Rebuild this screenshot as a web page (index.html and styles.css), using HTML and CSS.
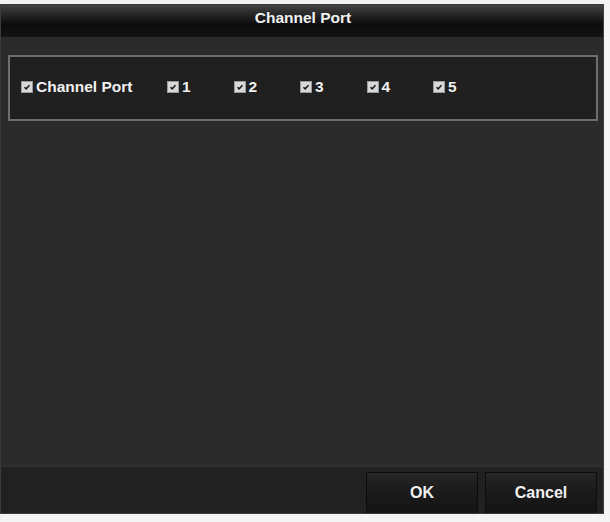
FILE: index.html
```html
<!DOCTYPE html>
<html>
<head>
<meta charset="utf-8">
<link rel="stylesheet" href="styles.css">
</head>
<body>
<div class="dialog">
  <div class="titlebar">Channel Port</div>
  <div class="content">
    <div class="group">
      <label class="item item-main"><span class="cb"><svg viewBox="0 0 12 12"><path d="M3 6.2 L5 8.2 L9 3.8" fill="none" stroke="#1a1a1a" stroke-width="1.8"/></svg></span>Channel Port</label>
      <label class="item"><span class="cb"><svg viewBox="0 0 12 12"><path d="M3 6.2 L5 8.2 L9 3.8" fill="none" stroke="#1a1a1a" stroke-width="1.8"/></svg></span>1</label>
      <label class="item"><span class="cb"><svg viewBox="0 0 12 12"><path d="M3 6.2 L5 8.2 L9 3.8" fill="none" stroke="#1a1a1a" stroke-width="1.8"/></svg></span>2</label>
      <label class="item"><span class="cb"><svg viewBox="0 0 12 12"><path d="M3 6.2 L5 8.2 L9 3.8" fill="none" stroke="#1a1a1a" stroke-width="1.8"/></svg></span>3</label>
      <label class="item"><span class="cb"><svg viewBox="0 0 12 12"><path d="M3 6.2 L5 8.2 L9 3.8" fill="none" stroke="#1a1a1a" stroke-width="1.8"/></svg></span>4</label>
      <label class="item"><span class="cb"><svg viewBox="0 0 12 12"><path d="M3 6.2 L5 8.2 L9 3.8" fill="none" stroke="#1a1a1a" stroke-width="1.8"/></svg></span>5</label>
    </div>
  </div>
  <div class="footer">
    <button class="btn">OK</button>
    <button class="btn">Cancel</button>
  </div>
</div>
</body>
</html>
```
FILE: styles.css
```css
html, body {
  margin: 0;
  padding: 0;
  background: #f4f4f4;
}
body {
  font-family: "Liberation Sans", Arial, sans-serif;
  padding-top: 4px;
}
.dialog {
  width: 602px;
  height: 508px;
  border: 1px solid #3c3c3c;
  background: #2c2c2c;
  display: flex;
  flex-direction: column;
}
.titlebar {
  height: 32px;
  flex: none;
  background: linear-gradient(to bottom, #444 0%, #262626 30%, #0c0c0c 60%, #141414 100%);
  color: #f2f2f2;
  font-weight: bold;
  font-size: 15.5px;
  display: flex;
  align-items: center;
  justify-content: center;
  padding-left: 2px;
  padding-bottom: 6px;
  box-sizing: border-box;
}
.content {
  flex: 1;
  padding: 18px 5px 0 7px;
  background: #2b2b2b;
}
.group {
  height: 59px;
  border: 2px solid #6e6e6e;
  background: #202020;
  display: flex;
  align-items: center;
  padding-left: 11px;
  padding-bottom: 3px;
  box-sizing: content-box;
}
.item {
  display: flex;
  align-items: center;
  color: #f0f0f0;
  font-size: 15.5px;
  font-weight: bold;
  width: 66.5px;
  flex: none;
}
.item-main {
  width: 146px;
}
.cb {
  width: 12px;
  height: 12px;
  background: #d8d8d8;
  border: 1px solid #9a9a9a;
  box-sizing: border-box;
  margin-right: 3px;
  display: flex;
}
.cb svg {
  width: 10px;
  height: 10px;
}
.footer {
  height: 46px;
  flex: none;
  background: #212121;
  border-top: 1px solid #333;
  display: flex;
  justify-content: flex-end;
  align-items: flex-end;
  gap: 7px;
  padding-right: 6px;
}
.btn {
  width: 112px;
  height: 41px;
  background: linear-gradient(to bottom, #262626 0%, #1a1a1a 50%, #141414 100%);
  border: 1px solid #0c0c0c;
  border-bottom: none;
  color: #f0f0f0;
  font-family: "Liberation Sans", Arial, sans-serif;
  font-weight: bold;
  font-size: 16px;
  padding: 0;
}
```
